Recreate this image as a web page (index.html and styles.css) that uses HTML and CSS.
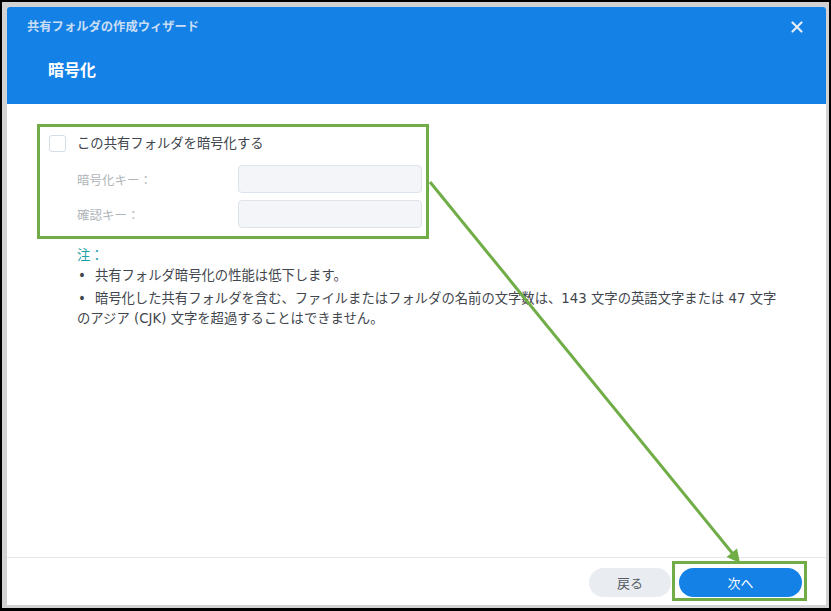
FILE: index.html
```html
<!DOCTYPE html>
<html lang="ja">
<head>
<meta charset="utf-8">
<title>共有フォルダの作成ウィザード</title>
<link rel="stylesheet" href="styles.css">
</head>
<body>
<div class="screen">
  <div class="dialog">
    <header class="header">
      <div class="header-top">
        <span class="wizard-title">共有フォルダの作成ウィザード</span>
        <svg class="close" width="12" height="12" viewBox="0 0 12 12"><path d="M1.5 1.5 L10.5 10.5 M10.5 1.5 L1.5 10.5" stroke="#e3eefb" stroke-width="2.2" stroke-linecap="round"/></svg>
      </div>
      <h1 class="step-title">暗号化</h1>
    </header>
    <main class="content">
      <section class="highlight">
        <label class="check-row">
          <span class="checkbox"></span>
          <span class="check-text">この共有フォルダを暗号化する</span>
        </label>
        <div class="field-row">
          <span class="field-label">暗号化キー：</span>
          <span class="field-input"></span>
        </div>
        <div class="field-row">
          <span class="field-label">確認キー：</span>
          <span class="field-input"></span>
        </div>
      </section>
      <section class="notes">
        <div class="note-title">注：</div>
        <p class="note-item"><span class="bullet">•</span>共有フォルダ暗号化の性能は低下します。</p>
        <p class="note-item"><span class="bullet">•</span>暗号化した共有フォルダを含む、ファイルまたはフォルダの名前の文字数は、143 文字の英語文字または 47 文字のアジア (CJK) 文字を超過することはできません。</p>
      </section>
    </main>
    <footer class="footer">
      <button class="btn btn-back">戻る</button>
      <span class="next-wrap"><button class="btn btn-next">次へ</button></span>
    </footer>
  </div>
  <svg class="arrow" width="831" height="611" viewBox="0 0 831 611">
    <line x1="430" y1="182" x2="733" y2="554" stroke="#70ad47" stroke-width="3"/>
    <polygon points="740,563 726.5,557 737,548.5" fill="#70ad47"/>
  </svg>
</div>
</body>
</html>
```

FILE: styles.css
```css
* { box-sizing: border-box; }

html, body {
  margin: 0;
  padding: 0;
  background: #000;
}

body {
  font-family: "DejaVu Sans", "Noto Sans CJK JP", "Noto Sans", sans-serif;
  color: #414b55;
}

.screen {
  position: relative;
  width: 831px;
  height: 611px;
  border-style: solid;
  border-color: #000;
  border-width: 2px 2px 3px 2px;
  background: #d2d2d2;
  padding: 5px 3px 3px 5px;
}

.dialog {
  width: 819px;
  height: 598px;
  background: #fff;
  display: flex;
  flex-direction: column;
  border-radius: 3px 3px 0 0;
  overflow: hidden;
}

.header {
  background: #1481e6;
  height: 97px;
  flex: none;
  padding: 11px 0 0 20px;
}

.header-top {
  display: flex;
  align-items: center;
  justify-content: space-between;
  padding-right: 23px;
  height: 18px;
}

.wizard-title {
  font-size: 12.3px;
  font-weight: 700;
  color: #c9def5;
  line-height: 18px;
}

.close { display: block; }

.step-title {
  margin: 24px 0 0 21px;
  font-size: 16px;
  font-weight: 700;
  color: #fff;
  line-height: 22px;
}

.content {
  flex: 1;
  padding: 20px 0 0 30px;
}

.highlight {
  width: 392px;
  height: 115px;
  border: 3px solid #70ad47;
  padding: 8px 4px 0 9px;
  display: flex;
  flex-direction: column;
}

.check-row {
  display: flex;
  align-items: center;
  height: 17px;
  gap: 11px;
}

.checkbox {
  width: 17px;
  height: 17px;
  border: 1px solid #d5dde6;
  border-radius: 3px;
  background: #fff;
  flex: none;
}

.check-text {
  font-size: 13.33px;
  color: #3f464d;
  line-height: 17px;
}

.field-row {
  display: flex;
  align-items: center;
  padding-left: 28px;
  margin-top: 13px;
}

.field-row + .field-row { margin-top: 7px; }

.field-label {
  width: 161px;
  font-size: 12.5px;
  color: #b0b5ba;
}

.field-input {
  width: 184px;
  height: 28px;
  background: #f3f5f8;
  border: 1px solid #dde3ea;
  border-radius: 4px;
}

.notes {
  margin: 7px 0 0 40px;
  width: 706px;
  font-size: 13.33px;
  line-height: 20px;
  color: #3f464d;
}

.note-title {
  color: #1fa0a8;
}

.note-item {
  margin: 0 0 3px;
}

.bullet {
  padding: 0 9px 0 1px;
}

.footer {
  flex: none;
  height: 48px;
  border-top: 1px solid #e6e9ec;
  display: flex;
  justify-content: flex-end;
  align-items: flex-start;
  padding: 10px 24px 0 0;
  gap: 8px;
}

.btn {
  height: 29px;
  border: none;
  border-radius: 15px;
  font-family: "Noto Sans CJK JP", sans-serif;
  font-size: 13px;
  padding: 0;
  cursor: pointer;
}

.btn-back {
  width: 82px;
  background: #e9edf1;
  color: #555c63;
}

.next-wrap {
  position: relative;
  display: block;
}

.next-wrap::after {
  content: "";
  position: absolute;
  left: -7px;
  top: -7px;
  right: -5px;
  bottom: -4px;
  border: 3px solid #70ad47;
  pointer-events: none;
}

.btn-next {
  width: 123px;
  background: #1481e6;
  color: #fff;
  display: block;
}

.arrow {
  position: absolute;
  left: -2px;
  top: -2px;
  pointer-events: none;
}
```
